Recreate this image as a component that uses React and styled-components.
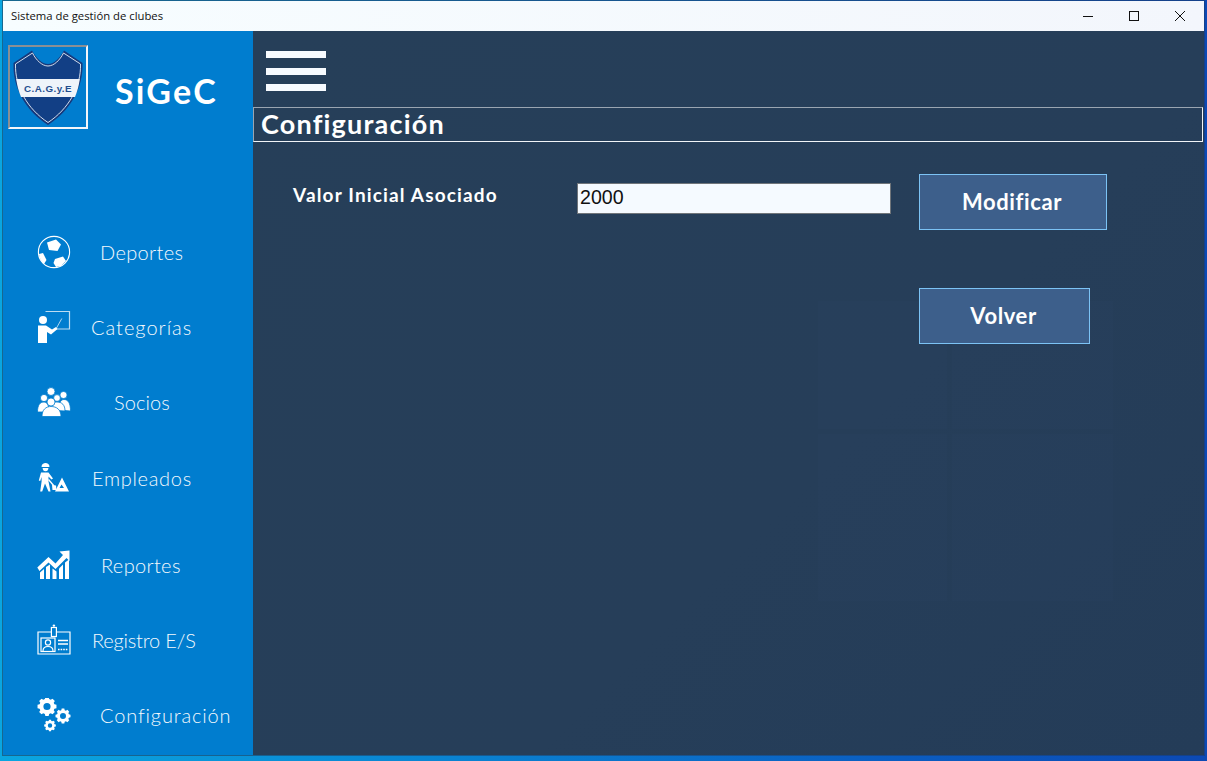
import React from 'react'
import styled, { createGlobalStyle } from 'styled-components'

const GlobalStyle = createGlobalStyle`
  html, body { margin: 0; padding: 0; height: 100%; overflow: hidden; }
  body { background: linear-gradient(90deg, #0aa6e0 0%, #0a80d0 40%, #0b5cc0 75%, #0c49b4 100%); }
  * { box-sizing: border-box; }
`

const Font = `"Lato", "Open Sans", "Liberation Sans", sans-serif`

const Desktop = styled.div`
  width: 1207px;
  height: 761px;
  padding: 0 2px 5px 2px;
`

const Window = styled.div`
  height: 756px;
  display: flex;
  flex-direction: column;
  border: 1px solid;
  border-image: linear-gradient(90deg, #17688f, #17528f 60%, #14408a) 1;
`

const TitleBar = styled.div`
  height: 30px;
  flex: none;
  display: flex;
  align-items: center;
  justify-content: space-between;
  background: linear-gradient(90deg, #f7fdff, #f3f6fc);
  padding: 0 1px 0 8px;
  font: 11.3px "Open Sans", "Noto Sans", sans-serif;
  color: #111;
`

const TitleText = styled.span`
  margin-top: -2px;
`

const WinButtons = styled.div`
  display: flex;
`

const WinButton = styled.div`
  width: 46px;
  height: 30px;
  display: flex;
  align-items: center;
  justify-content: center;
`

const Body = styled.div`
  flex: 1;
  display: flex;
  min-height: 0;
`

const Sidebar = styled.aside`
  width: 250px;
  flex: none;
  background: #007dcf;
  padding: 14px 0 0 5px;
`

const Brand = styled.div`
  display: flex;
  align-items: center;
  height: 84px;
`

const LogoBox = styled.div`
  width: 80px;
  height: 84px;
  flex: none;
  border: 2px solid;
  border-color: #8a8f94 #f3f6fa #f3f6fa #8a8f94;
  display: flex;
  align-items: center;
  justify-content: center;
`

const BrandName = styled.div`
  margin: 6px 0 0 27px;
  color: #fff;
  font: 700 34px ${Font};
  letter-spacing: 2.2px;
`

const Nav = styled.nav`
  margin-top: 85px;
  display: flex;
  flex-direction: column;
`

const NavItem = styled.div`
  height: 75px;
  margin-top: ${(p) => (p.$gap ? `${p.$gap}px` : 0)};
  display: flex;
  align-items: center;
  padding-left: 29px;
  color: #f4f9fd;
`

const NavIcon = styled.div`
  width: 34px;
  height: 34px;
  flex: none;
  display: flex;
  align-items: center;
  justify-content: center;
`

const NavLabel = styled.span`
  font: 300 20px ${Font};
  letter-spacing: ${(p) => p.$track}px;
  margin-left: ${(p) => p.$left}px;
  white-space: nowrap;
`

const Main = styled.main`
  flex: 1;
  position: relative;
  overflow: hidden;
  background: linear-gradient(135deg, #263f59 0%, #263e59 60%, #243c58 100%);
`

// reflejo del logo de windows que se ve a traves del fondo
const Reflection = styled.div`
  position: absolute;
  left: 565px;
  top: 270px;
  width: 295px;
  height: 300px;
  display: grid;
  grid-template-columns: 1fr 1.25fr;
  grid-template-rows: 1fr 1.3fr;
  gap: 5px;
  pointer-events: none;
  div { background: rgba(120, 170, 200, 0.018); }
`

const Hamburger = styled.div`
  margin: 20px 0 0 13px;
  width: 60px;
  height: 40px;
  display: flex;
  flex-direction: column;
  justify-content: space-between;
  span { height: 7px; background: #f7fbff; display: block; }
`

const Header = styled.div`
  margin-top: 16px;
  width: 950px;
  height: 35px;
  border: 1px solid;
  border-color: #9aa5b1 #f2f5f8 #f2f5f8 #9aa5b1;
  padding-left: 7px;
  color: #fff;
  font: 700 27px/32px ${Font};
  letter-spacing: 1.2px;
`

const Form = styled.div`
  display: grid;
  grid-template-columns: 284px 314px auto;
  padding: 32px 0 0 40px;
  position: relative;
`

const FieldLabel = styled.label`
  color: #fff;
  font: 700 19px/26px ${Font};
  letter-spacing: 1.15px;
  padding-top: 8px;
`

const ValueInput = styled.input`
  width: 314px;
  height: 31px;
  margin-top: 9px;
  border: 1px solid #70757a;
  border-radius: 0;
  background: #f5faff;
  padding: 0 2px 2px;
  color: #111;
  font: 19.6px "Liberation Sans", Arial, sans-serif;
  outline: none;
`

const Actions = styled.div`
  margin-left: 28px;
  display: flex;
  flex-direction: column;
  align-items: flex-start;
  gap: 58px;
`

const ActionButton = styled.button`
  width: ${(p) => p.$w}px;
  height: 56px;
  border: 1px solid #7cc3f5;
  background: #3d5f8b;
  color: #fff;
  font: 700 22px ${Font};
  letter-spacing: 0.6px;
  padding: 0 ${(p) => p.$pad || 0}px 2px 0;
`

function Shield() {
  return (
    <svg width="72" height="78" viewBox="0 0 72 78">
      <path d="M20 2.5 C24 10 30 16 36 16 C42 16 48 10 52 2.5 L70.5 15 C71.5 40 58 63 36 77 C14 63 0.5 40 1.5 15 Z" fill="#16397c" />
      <path d="M20.5 5 C24 12 30 18 36 18 C42 18 48 12 51.5 5 L68.5 16 C69.2 39 56.5 61 36 74.5 C15.5 61 2.8 39 3.5 16 Z" fill="#123f85" stroke="#e6eef6" strokeWidth="0.9" />
      <path d="M4.2 31 H67.8 C67 37 65.5 43 63 49 H9 C6.5 43 5 37 4.2 31 Z" fill="#eef4fa" />
      <text x="36" y="44" textAnchor="middle" fontFamily="Liberation Sans, sans-serif" fontWeight="700" fontSize="9.8" letterSpacing="0.45" fill="#1f4e8f">C.A.G.y.E</text>
    </svg>
  )
}

function Ball() {
  return (
    <svg width="34" height="34" viewBox="0 0 34 34" fill="#fff">
      <circle cx="17" cy="17" r="15.6" fill="none" stroke="#fff" strokeWidth="1.1" />
      <path d="M10 7.5 L19 4.5 L24 9.5 L20.5 16 L12 15 Z" />
      <path d="M2 19 L6 18 L9.5 25 L7 29 C4 26 2.3 23 2 19 Z" />
      <path d="M18 24 L26 21.5 L29 26 L24 31 L19 32 L16.5 28 Z" />
    </svg>
  )
}

function Teacher() {
  return (
    <svg width="34" height="34" viewBox="0 0 34 34" fill="#fff">
      <path d="M8.5 1.5 H32.5 V19 H17" fill="none" stroke="#bcdcf2" strokeWidth="1.2" />
      <circle cx="6" cy="10" r="4" />
      <path d="M1 15.5 H9 L15 19.5 L19 17 L20.5 19 L14 24.5 L10 22 V33 H1 Z" />
      <path d="M19.5 18 L24.8 8.5" stroke="#dcecf8" strokeWidth="0.8" />
    </svg>
  )
}

function People() {
  return (
    <svg width="34" height="30" viewBox="0 0 34 30" fill="#fff" stroke="#007dcf" strokeWidth="0.8">
      <circle cx="14" cy="4.5" r="4" />
      <circle cx="7" cy="11" r="3.6" />
      <circle cx="26.5" cy="8" r="3.6" />
      <path d="M0.5 25 C0.5 18 3 15 7 15 C10 15 12 18 12 25 Z" />
      <path d="M22 23 C22 15 24 12.5 27 12.5 C31 12.5 33.5 16 33.5 24 Z" />
      <circle cx="20" cy="11" r="3.4" />
      <path d="M11 23 C11 17 14 15 20 15 C25 15 28 18 28 24 Z" />
      <circle cx="14" cy="15" r="4" />
      <path d="M5 29.5 C5 22.5 9 19.5 14 19.5 C19.5 19.5 24 22.5 24 29.5 Z" />
    </svg>
  )
}

function Worker() {
  return (
    <svg width="32" height="30" viewBox="0 0 32 30" fill="#fff">
      <path d="M3.5 4 C3.5 1 5.5 0 7.5 0 C9.5 0 11.5 1 11.5 4 Z" />
      <path d="M4.6 5 H10.4 C10.4 7 9.2 8.3 7.5 8.3 C5.8 8.3 4.6 7 4.6 5 Z" />
      <path d="M3 9.5 H10.5 L15 15.5 L13.5 16.5 L10.5 13.5 L10.5 18.5 L12.5 28.5 H10.5 L7 20.5 L4.2 28.5 H2.2 L3.6 18.5 V14 L2.2 18 L0.8 17.5 Z" />
      <path d="M11 16 L16.5 22.5 L15.5 23.5 L10 17 Z" />
      <path d="M14 22 L18 22.5 L18.5 27 L14.5 27 Z" />
      <path d="M17 28.5 L24 14.5 L31 28.5 Z M23.5 21.5 L21.5 25 H26 Z" fillRule="evenodd" />
    </svg>
  )
}

function Growth() {
  return (
    <svg width="34" height="30" viewBox="0 0 34 30" fill="#fff">
      <path d="M32.5 0.5 V11 L29.5 8 L18.5 19 L11.5 12.5 L2.5 21 L0.3 17.5 L11.5 7 L18.5 13.5 L26 5 L22.5 1.5 Z" />
      <path d="M3 22.5 L7 19 V29 H3 Z" />
      <path d="M9 17 L13 14.5 V29 H9 Z" />
      <path d="M15.5 18.5 L19.5 21.5 V29 H15.5 Z" />
      <path d="M22 18.5 L26 14.5 V29 H22 Z" />
      <path d="M28 12.5 L32 9.5 V29 H28 Z" />
    </svg>
  )
}

function Badge() {
  return (
    <svg width="34" height="31" viewBox="0 0 34 31" fill="none" stroke="#fff" strokeWidth="1.2">
      <path d="M14 8 H1 V30 H33 V8 H20" />
      <rect x="14.4" y="3.5" width="5" height="9" />
      <circle cx="16.9" cy="1.6" r="1.2" fill="#fff" stroke="none" />
      <rect x="4" y="14" width="14" height="13.5" />
      <circle cx="11" cy="18.5" r="2.6" />
      <path d="M6 27 C6 23.5 8 22.5 11 22.5 C14 22.5 16 23.5 16 27" />
      <path d="M21 16.5 H31 M21 20 H31" strokeWidth="1.4" />
      <path d="M21 25.5 H31" strokeWidth="1.6" strokeDasharray="1.6 1" />
    </svg>
  )
}

// dibuja un engranaje con n dientes y agujero central
function gearPath(x, y, r, hole, n) {
  const inner = r * 0.8
  const step = (Math.PI * 2) / n
  const pts = []
  for (let i = 0; i < n; i++) {
    const a = i * step
    const at = (rad, o) => `${(x + rad * Math.cos(a + o)).toFixed(2)} ${(y + rad * Math.sin(a + o)).toFixed(2)}`
    pts.push(at(inner, -step * 0.36), at(r, -step * 0.22), at(r, step * 0.22), at(inner, step * 0.36))
  }
  const ring = `M${x - hole} ${y} a${hole} ${hole} 0 1 0 ${hole * 2} 0 a${hole} ${hole} 0 1 0 ${-hole * 2} 0 Z`
  return `M${pts.join(' L')} Z ${ring}`
}

function Gears() {
  return (
    <svg width="34" height="34" viewBox="0 0 34 34" fill="#fff">
      <path fillRule="evenodd" d={gearPath(10, 8.5, 9.6, 3.6, 8)} />
      <path fillRule="evenodd" d={gearPath(26, 18, 7.6, 3, 8)} />
      <path fillRule="evenodd" d={gearPath(13, 27.5, 5.9, 2.2, 8)} />
    </svg>
  )
}

const items = [
  { label: 'Deportes', left: 29, track: 0.35, icon: <Ball /> },
  { label: 'Categorías', left: 20, track: 1, icon: <Teacher /> },
  { label: 'Socios', left: 43, track: 0.1, icon: <People /> },
  { label: 'Empleados', left: 21, gap: 1, track: 0.7, icon: <Worker /> },
  { label: 'Reportes', left: 30, gap: 12, track: 0.35, icon: <Growth /> },
  { label: 'Registro E/S', left: 21, track: -0.2, icon: <Badge /> },
  { label: 'Configuración', left: 29, track: 0.85, icon: <Gears /> },
]

export default function App() {
  return (
    <Desktop>
      <GlobalStyle />
      <Window>
        <TitleBar>
          <TitleText>Sistema de gestión de clubes</TitleText>
          <WinButtons>
            <WinButton>
              <svg width="12" height="12" viewBox="0 0 12 12"><path d="M1 6.5 H11" stroke="#111" /></svg>
            </WinButton>
            <WinButton>
              <svg width="12" height="12" viewBox="0 0 12 12"><rect x="1.5" y="1.5" width="9" height="9" fill="none" stroke="#111" /></svg>
            </WinButton>
            <WinButton>
              <svg width="12" height="12" viewBox="0 0 12 12"><path d="M1 1 L11 11 M11 1 L1 11" stroke="#111" /></svg>
            </WinButton>
          </WinButtons>
        </TitleBar>
        <Body>
          <Sidebar>
            <Brand>
              <LogoBox><Shield /></LogoBox>
              <BrandName>SiGeC</BrandName>
            </Brand>
            <Nav>
              {items.map((item) => (
                <NavItem key={item.label} $gap={item.gap}>
                  <NavIcon>{item.icon}</NavIcon>
                  <NavLabel $left={item.left} $track={item.track}>{item.label}</NavLabel>
                </NavItem>
              ))}
            </Nav>
          </Sidebar>
          <Main>
            <Reflection><div /><div /><div /><div /></Reflection>
            <Hamburger><span /><span /><span /></Hamburger>
            <Header>Configuración</Header>
            <Form>
              <FieldLabel>Valor Inicial Asociado</FieldLabel>
              <ValueInput defaultValue="2000" />
              <Actions>
                <ActionButton $w={188} $pad={2}>Modificar</ActionButton>
                <ActionButton $w={171} $pad={2}>Volver</ActionButton>
              </Actions>
            </Form>
          </Main>
        </Body>
      </Window>
    </Desktop>
  )
}
